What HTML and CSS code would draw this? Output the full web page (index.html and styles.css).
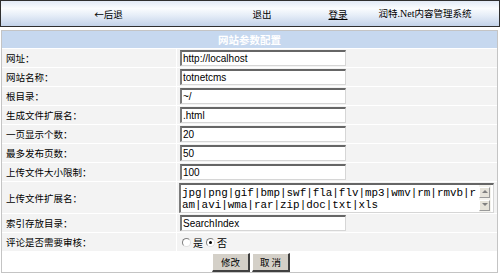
FILE: index.html
```html
<!DOCTYPE html>
<html lang="zh-CN">
<head>
<meta charset="utf-8">
<title>网站参数配置</title>
<link rel="stylesheet" href="styles.css">
</head>
<body>
<div class="topbar">
  <span class="nav">←后退</span>
  <span class="nav">退出</span>
  <span class="nav login">登录</span>
  <span class="nav brand">润特<span class="net">.Net</span>内容管理系统</span>
  <span></span>
</div>
<div class="panel">
  <div class="title">网站参数配置</div>
  <div class="label">网址：</div><div class="field"><input class="text" value="http://localhost"></div>
  <div class="label">网站名称：</div><div class="field"><input class="text" value="totnetcms"></div>
  <div class="label">根目录：</div><div class="field"><input class="text" value="~/"></div>
  <div class="label">生成文件扩展名：</div><div class="field"><input class="text" value=".html"></div>
  <div class="label">一页显示个数：</div><div class="field"><input class="text" value="20"></div>
  <div class="label">最多发布页数：</div><div class="field"><input class="text" value="50"></div>
  <div class="label">上传文件大小限制：</div><div class="field"><input class="text" value="100"></div>
  <div class="label">上传文件扩展名：</div>
  <div class="field">
    <div class="areabox">
      <textarea class="area" wrap="off">jpg|png|gif|bmp|swf|fla|flv|mp3|wmv|rm|rmvb|r
am|avi|wma|rar|zip|doc|txt|xls</textarea>
      <div class="scroll">
        <div class="sbtn"><svg width="6" height="4" viewBox="0 0 6 4"><path d="M3 0L6 3H0Z" fill="#808080"/></svg></div>
        <div class="sbtn"><svg width="6" height="4" viewBox="0 0 6 4"><path d="M0 0H6L3 3Z" fill="#808080"/></svg></div>
      </div>
    </div>
  </div>
  <div class="label">索引存放目录：</div><div class="field"><input class="text" value="SearchIndex"></div>
  <div class="label">评论是否需要审核：</div>
  <div class="field radios">
    <label class="opt"><input type="radio" name="audit" class="radio">是</label>
    <label class="opt"><input type="radio" name="audit" class="radio" checked>否</label>
  </div>
  <div class="actions">
    <button class="btn">修改</button>
    <button class="btn">取 消</button>
  </div>
</div>
</body>
</html>
```

FILE: styles.css
```css
html, body {
  margin: 0;
  padding: 0;
  background: #ffffff;
}
body {
  width: 500px;
  height: 279px;
  overflow: hidden;
  font-family: "Noto Sans CJK SC", "Liberation Sans", sans-serif;
  font-size: 9.5px;
  color: #000;
}
.topbar {
  height: 25px;
  border: 1px solid #2f2f2f;
  background: linear-gradient(#e2eaf6 0%, #fafcfe 30%, #e4ecf7 60%, #c3d3ea 100%);
  display: grid;
  grid-template-columns: 215px 92px 60px 114px 1fr;
  align-items: center;
}
.nav {
  text-align: center;
  font-size: 9.5px;
  line-height: 12px;
}
.login {
  text-decoration: underline;
}
.net {
  font-family: "Liberation Serif", serif;
  font-size: 10px;
}
.panel {
  margin: 3px 2px 0 1px;
  border: 1px solid #c4c4c4;
  background: #ffffff;
  display: grid;
  grid-template-columns: 174px 1fr;
  grid-template-rows: 17px repeat(7, 18px) 31px 18px 18px 20px;
  gap: 1px;
}
.title {
  grid-column: 1 / -1;
  background: #c6d8ef;
  color: #ffffff;
  font-weight: bold;
  font-size: 10.5px;
  text-align: center;
  line-height: 17px;
}
.label {
  background: #f3f3f3;
  padding-left: 4px;
  display: flex;
  align-items: center;
}
.field {
  background: #f3f3f3;
  padding-left: 3px;
  display: flex;
  align-items: center;
}
.text {
  box-sizing: border-box;
  width: 166px;
  height: 16px;
  margin: 0;
  padding: 0 1px;
  border-style: solid;
  border-width: 2px 1px 1px 2px;
  border-color: #666666 #d6d6d6 #d6d6d6 #7a7a7a;
  background: #ffffff;
  font-family: "Liberation Sans", Arial, sans-serif;
  font-size: 10px;
  color: #000;
  outline: none;
}
.areabox {
  box-sizing: border-box;
  width: 315px;
  height: 30px;
  margin-left: -1px;
  border-style: solid;
  border-width: 2px 1px 1px 2px;
  border-color: #666666 #d6d6d6 #d6d6d6 #7a7a7a;
  background: #ffffff;
  display: flex;
}
.area {
  flex: 1;
  margin: 0;
  padding: 2px 1px 0;
  border: 0;
  resize: none;
  overflow: hidden;
  font-family: "Liberation Mono", "Courier New", monospace;
  font-size: 10.9px;
  line-height: 12px;
  color: #000;
  background: transparent;
  outline: none;
}
.scroll {
  width: 12px;
  margin-right: 2px;
  display: flex;
  flex-direction: column;
  justify-content: space-between;
  padding: 2px 0 1px;
  background: #f4f3ee;
}
.sbtn {
  box-sizing: border-box;
  width: 11px;
  height: 11px;
  background: #e6e3da;
  border: 1px solid;
  border-color: #ffffff #9a9a9a #9a9a9a #ffffff;
  display: flex;
  align-items: center;
  justify-content: center;
}
.radios {
  padding-left: 5px;
  gap: 3px;
}
.opt {
  display: flex;
  align-items: center;
  gap: 2px;
  font-size: 10px;
}
.radio {
  appearance: none;
  -webkit-appearance: none;
  box-sizing: border-box;
  width: 9px;
  height: 9px;
  margin: 0;
  border-radius: 50%;
  border: 1px solid;
  border-color: #808080 #e0e0e0 #e0e0e0 #808080;
  background: #ffffff;
  display: grid;
  place-items: center;
}
.radio:checked::after {
  content: "";
  width: 3px;
  height: 3px;
  border-radius: 50%;
  background: #000;
}
.actions {
  grid-column: 1 / -1;
  background: #ffffff;
  display: flex;
  justify-content: center;
  align-items: center;
  gap: 2px;
  padding-left: 3px;
}
.btn {
  box-sizing: border-box;
  width: 38px;
  height: 19px;
  margin: 0;
  padding: 0;
  background: #d4d0c8;
  border-style: solid;
  border-width: 1px 2px 2px 1px;
  border-color: #ffffff #404040 #404040 #ffffff;
  font-family: "Noto Sans CJK SC", sans-serif;
  font-size: 9.5px;
  color: #000;
}
```
